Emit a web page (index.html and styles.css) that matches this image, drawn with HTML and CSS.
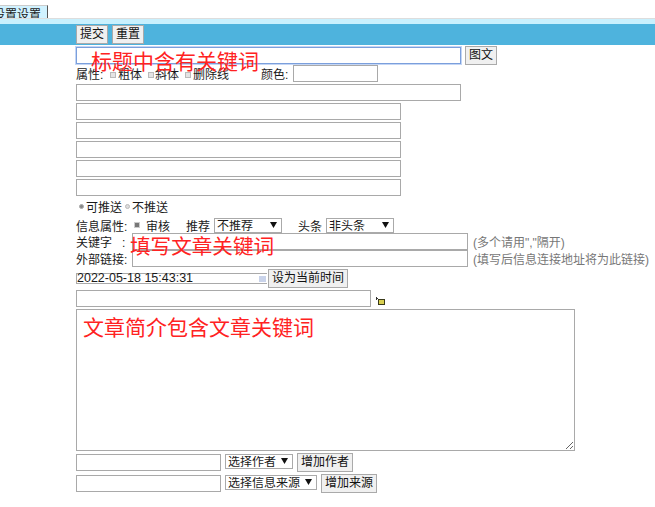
FILE: index.html
```html
<!DOCTYPE html>
<html lang="zh-CN">
<head>
  <meta charset="UTF-8">
  <title>增加信息</title>
  <link rel="stylesheet" href="styles.css">
</head>
<body>

  <!-- tab strip -->
  <div class="tabs">
    <div class="tab"><span class="tab-text">设置设置</span></div>
  </div>
  <div class="band-light"></div>
  <div class="band-blue">
    <button class="btn" type="button">提交</button>
    <button class="btn" type="button">重置</button>
  </div>

  <form class="form">
    <div class="row title-row">
      <input class="field focused w385" type="text">
      <button class="btn" type="button">图文</button>
      <span class="mark mark-title">标题中含有关键词</span>
    </div>

    <div class="row attr-row">
      <span class="lbl">属性:</span>
      <span class="check"></span><span>粗体</span>
      <span class="check narrow"></span><span>斜体</span>
      <span class="check"></span><span>删除线</span>
      <span class="lbl color-label">颜色:</span>
      <input class="field w85" type="text">
    </div>

    <div class="row r2"><input class="field w385" type="text"></div>
    <div class="row r2"><input class="field w325" type="text"></div>
    <div class="row r2"><input class="field w325" type="text"></div>
    <div class="row r2"><input class="field w325" type="text"></div>
    <div class="row r2"><input class="field w325" type="text"></div>
    <div class="row r2"><input class="field w325" type="text"></div>

    <div class="row push-row">
      <span class="radio on"></span><span>可推送</span>
      <span class="radio"></span><span>不推送</span>
    </div>

    <div class="row info-row">
      <span class="info-label">信息属性:</span>
      <span class="check tick"></span>
      <span>审核</span>
      <span class="rec">推荐</span>
      <select class="sel w68"><option>不推荐</option></select>
      <span class="head">头条</span>
      <select class="sel w68"><option>非头条</option></select>
    </div>

    <div class="row key-row">
      <span class="key-label">关键字&nbsp;&nbsp;&nbsp;:</span>
      <input class="field w336" type="text">
      <span class="hint">(多个请用","隔开)</span>
      <span class="mark mark-key">填写文章关键词</span>
    </div>
    <div class="row key-row">
      <span class="key-label">外部链接:</span>
      <input class="field w336" type="text">
      <span class="hint">(填写后信息连接地址将为此链接)</span>
    </div>

    <div class="row date-row">
      <div class="date-box">2022-05-18 15:43:31<span class="date-pick"></span></div>
      <button class="btn now" type="button">设为当前时间</button>
    </div>

    <div class="row pic-row">
      <input class="field w295" type="text">
      <svg class="pic-icon" width="9" height="8" viewBox="0 0 9 8">
        <path d="M0 0h1v1h1v1H1v1H0z" fill="#333"/>
        <rect x="2" y="2" width="7" height="6" fill="#3a3a1a"/>
        <rect x="3" y="3" width="5" height="4" fill="#d8cf50"/>
      </svg>
    </div>

    <div class="row intro-row">
      <textarea class="intro"></textarea>
      <span class="mark mark-intro">文章简介包含文章关键词</span>
    </div>

    <div class="row src-row">
      <input class="field w145" type="text">
      <select class="sel w68"><option>选择作者</option></select>
      <button class="btn" type="button">增加作者</button>
    </div>
    <div class="row src-row">
      <input class="field w145" type="text">
      <select class="sel w92"><option>选择信息来源</option></select>
      <button class="btn" type="button">增加来源</button>
    </div>
  </form>

</body>
</html>
```

FILE: styles.css
```css
html, body {
  margin: 0;
  padding: 0;
  background: #fff;
  overflow: hidden;
}

body {
  width: 655px;
  height: 507px;
  font-family: "Liberation Sans", "Noto Sans CJK SC", sans-serif;
  font-size: 12px;
  color: #1a1a1a;
}

/* top strip */
.tabs {
  height: 18px;
  box-sizing: border-box;
  padding-top: 5px;
  overflow: hidden;
}

.tab {
  width: 48px;
  height: 13px;
  box-sizing: border-box;
  background: #d0f2ff;
  border-top: 1px solid #ccc;
  border-right: 1px solid #555;
  overflow: hidden;
}

.tab-text {
  display: block;
  margin-left: -7px;
  line-height: 19px;
  white-space: nowrap;
}

.band-light {
  height: 5px;
  background: #c9f0fd;
  border-top: 1px solid #ddd;
}

.band-blue {
  height: 21px;
  background: #4eb3dd;
  display: flex;
  align-items: center;
  gap: 4px;
  padding-left: 76px;
}

/* form */
.form {
  padding-left: 76px;
}

.row {
  display: flex;
  align-items: center;
  position: relative;
}

.field {
  box-sizing: border-box;
  height: 17px;
  margin: 0;
  padding: 0 2px;
  border: 1px solid #a9a9a9;
  background: #fff;
  font: inherit;
  outline: none;
}

.focused {
  border-color: #7b9fdc;
  box-shadow: 0 0 0 1px #c4d6f5;
}

.w385 { width: 385px; }
.w336 { width: 336px; }
.w325 { width: 325px; }
.w295 { width: 295px; }
.w145 { width: 145px; }
.w85 { width: 85px; }

.btn {
  box-sizing: border-box;
  height: 19px;
  margin: 0;
  padding: 0 3px;
  border: 1px solid #aaa;
  background: #f0f0f0;
  color: #111;
  font: inherit;
  line-height: 17px;
  white-space: nowrap;
}

.sel {
  box-sizing: border-box;
  height: 15px;
  margin: 0;
  padding: 1px 0 0 2px;
  border: 1px solid #aaa;
  appearance: none;
  background: #fff url("data:image/svg+xml,%3Csvg xmlns='http://www.w3.org/2000/svg' width='7' height='6'%3E%3Cpath d='M0 0h7L3.5 6z' fill='%23111'/%3E%3C/svg%3E") no-repeat right 4px top 3px;
  color: #1a1a1a;
  font: inherit;
  line-height: 13px;
}

.w68 { width: 68px; }
.w92 { width: 92px; }

.check {
  box-sizing: border-box;
  width: 6px;
  height: 6px;
  margin: 0 2px 0 6px;
  background: #e4e4e4;
  border: 1px solid #bbb;
}

.narrow { margin-right: 1px; }

.tick {
  background: #777;
  border-color: #ccc;
  margin-right: 6px;
}

.radio {
  box-sizing: border-box;
  width: 5px;
  height: 5px;
  margin: 0 2px 0 3px;
  border-radius: 50%;
  background: #ddd;
  border: 1px solid #bbb;
}

.radio.on {
  background: #888;
  border-color: #aaa;
}

/* red notes typed over the fields */
.mark {
  position: absolute;
  z-index: 1;
  color: #f22;
  font-size: 21px;
  line-height: 24px;
  white-space: nowrap;
  pointer-events: none;
}

.mark-title { left: 15px; top: 4px; }
.mark-key { left: 54px; top: 2px; font-size: 20.6px; }
.mark-intro { left: 7px; top: 7px; }

/* rows */
.title-row {
  height: 19px;
  margin-top: 1px;
  gap: 4px;
}

.attr-row {
  height: 17px;
  line-height: 17px;
}

.attr-row span {
  margin-top: 3px;
}

.lbl {
  width: 28px;
  white-space: nowrap;
}

.color-label {
  margin-left: 32px;
  margin-right: 4px;
}

.r2 {
  height: 17px;
  margin-top: 2px;
}

.push-row {
  height: 16px;
  margin-top: 2px;
}

.info-row {
  height: 16px;
  margin-top: 3px;
}

.info-label {
  width: 52px;
  white-space: nowrap;
}

.rec,
.head {
  margin-left: 16px;
  margin-right: 4px;
}

.key-row {
  height: 17px;
}

.key-label {
  width: 56px;
  white-space: nowrap;
}

.hint {
  margin-left: 5px;
  color: #777;
}

.date-row {
  height: 19px;
  margin-top: 2px;
  gap: 1px;
}

.date-box {
  box-sizing: border-box;
  width: 191px;
  height: 11px;
  border: 1px solid #a9a9a9;
  border-right: 0;
  font-size: 12.5px;
  line-height: 9px;
  display: flex;
  justify-content: space-between;
  align-items: center;
  white-space: nowrap;
}

.date-pick {
  width: 7px;
  height: 6px;
  margin-right: 1px;
  background: #c9d3ea;
}

.pic-row {
  height: 17px;
  margin-top: 2px;
}

.pic-icon {
  margin-left: 5px;
  margin-top: 5px;
}

.intro-row {
  margin-top: 2px;
}

.intro {
  box-sizing: border-box;
  display: block;
  width: 499px;
  height: 142px;
  margin: 0;
  padding: 2px;
  border: 1px solid #a9a9a9;
  background: #fff;
}

.src-row {
  height: 19px;
  margin-top: 2px;
  gap: 4px;
}

.src-row .sel {
  margin-bottom: 2px;
}
```
